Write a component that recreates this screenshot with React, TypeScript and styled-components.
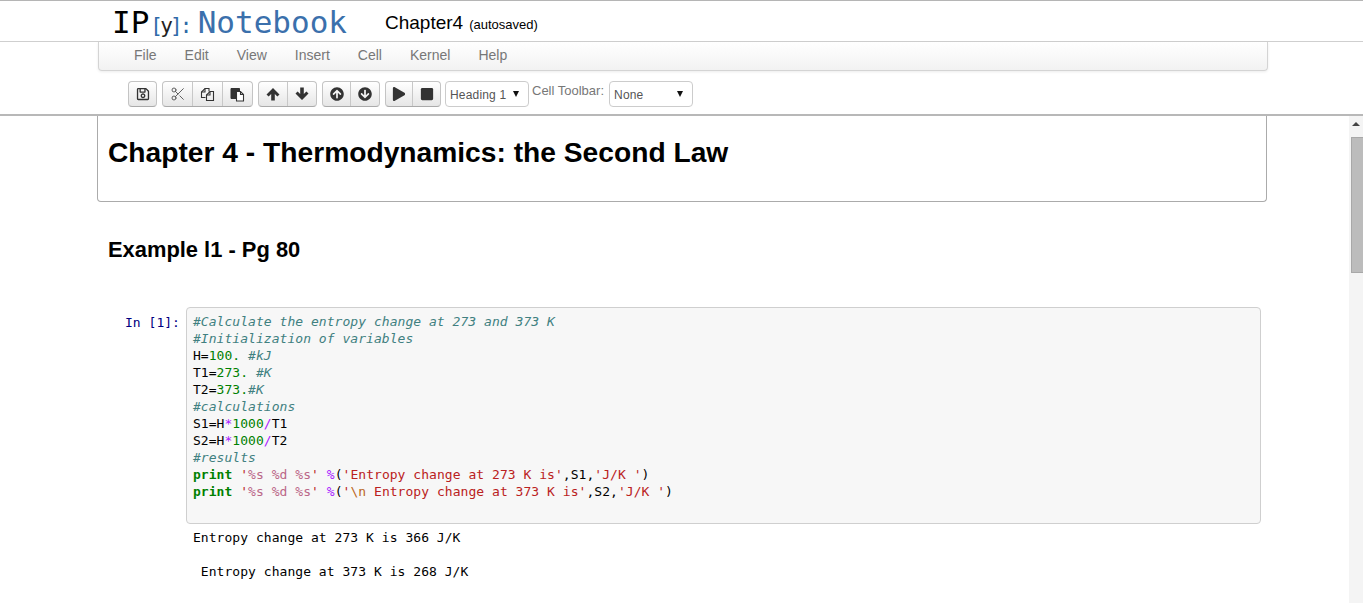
import React from 'react';
import styled, { createGlobalStyle } from 'styled-components';
import { FaRegSave, FaArrowCircleUp, FaArrowCircleDown, FaPlay, FaStop } from 'react-icons/fa';
import { Scissors } from 'lucide-react';

const Global = createGlobalStyle`
  html, body { margin: 0; padding: 0; height: 100%; overflow: hidden; background: #fff; }
  * { box-sizing: border-box; }
`;
const Page = styled.div`
  width: 1363px; height: 603px; display: flex; flex-direction: column;
  font-family: "Liberation Sans", Arial, sans-serif; color: #000; overflow: hidden;
`;
const Header = styled.header`
  height: 42px; flex: none; display: flex; align-items: flex-start; padding-left: 112px;
  border-top: 1px solid #b5b5b5; border-bottom: 1px solid #cfcfcf;
`;
const Logo = styled.div`
  width: 273px; display: flex; align-items: baseline; font-family: "DejaVu Sans Mono", monospace; height: 40px; line-height: 42px; white-space: nowrap;
`;
const LogoIP = styled.span`font-size: 31px; color: #000; margin-right: 1px;`;
const LogoY = styled.span`font-size: 21px; letter-spacing: -2.8px; color: #2f6aa8; margin-right: 8px; b { font-weight: 400; color: #222; }`;
const LogoWord = styled.span`font-size: 31px; color: #3b70ac;`;
const Title = styled.div`font-size: 19px; line-height: 20px; padding-top: 12px; white-space: nowrap;`;
const Saved = styled.span`font-size: 13px; margin-left: 6px;`;
const MenuWrap = styled.div`flex: none; padding: 0 95px 0 98px; height: 29px;`;
const Menu = styled.nav`
  height: 29px; display: flex; align-items: center; padding: 0 0 3px 21px;
  border: 1px solid #d4d4d4; border-top: none; border-radius: 0 0 4px 4px;
  background: linear-gradient(#ffffff, #f2f2f2); box-shadow: 0 1px 3px rgba(0,0,0,.08);
`;
const MenuItem = styled.span`font-size: 14px; color: #777; padding: 0 14px;`;
const Toolbar = styled.div`
  flex: none; height: 45px; display: flex; align-items: flex-start; padding: 10px 0 0 128px;
  border-bottom: 2px solid #b8b8b8;
`;
const Group = styled.div`
  display: flex; height: 26px; margin-right: ${p => p.$gap ?? 5}px;
  border: 1px solid #c4c4c4; border-bottom-color: #aaa; border-radius: 4px; overflow: hidden;
  background: linear-gradient(#ffffff, #e6e6e6);
`;
const Btn = styled.div`
  width: ${p => p.$w}px; display: flex; align-items: center; justify-content: center; color: ${p => p.$c ?? '#333'};
  font-size: 14px; &:not(:last-child) { border-right: 1px solid #c8c8c8; }
`;
const SelectBox = styled.div`
  width: ${p => p.$w}px; height: 26px; border: 1px solid #ccc; border-radius: 4px; background: #fff;
  display: flex; align-items: center; justify-content: space-between; padding: 2px 9px 0 4px; font-size: 12px; letter-spacing: .18px; color: #555;
`;
const Arrow = styled.span`
  width: 0; height: 0; border: 3.5px solid transparent; border-top: 6px solid #111; border-bottom: none; margin-top: -3px;
`;
const ToolbarLabel = styled.span`font-size: 13px; color: #777; line-height: 20px; margin: 0 5px 0 3px; white-space: nowrap;`;
const Body = styled.div`flex: 1; display: flex; min-height: 0;`;
const Main = styled.main`flex: 1; padding: 0 82px 0 97px; min-width: 0;`;
const HeadCell = styled.section`
  height: 86px; border: 1px solid #ababab; border-top: none; border-radius: 0 0 4px 4px; padding: 18px 10px 0;
`;
const H1 = styled.h1`margin: 0; font-size: 28.2px; line-height: 36px; font-weight: 700;`;
const H2 = styled.h2`margin: 34px 0 0 11px; font-size: 21.9px; line-height: 28px; font-weight: 700;`;
const CodeRow = styled.div`display: flex; margin-top: 43px;`;
const Prompt = styled.div`
  width: 89px; flex: none; text-align: right; padding: 7px 6px 0 0; font: 13px/17px "DejaVu Sans Mono", monospace; color: #000080; letter-spacing: .04px;
`;
const CodeBox = styled.div`
  width: 1075px; height: 217px; background: #f7f7f7; border: 1px solid #cfcfcf; border-radius: 4px; padding: 5px 6px 6px;
`;
const Pre = styled.pre`margin: 0; font: 13px/17px "DejaVu Sans Mono", monospace; letter-spacing: .04px; color: #000;`;
const Output = styled(Pre)`margin: 5px 0 0 96px;`;
const Cm = styled.i`color: #408080;`;
const Num = styled.span`color: #008000;`;
const Op = styled.span`color: #aa22ff;`;
const Kw = styled.b`color: #008000;`;
const Str = styled.span`color: #ba2121;`;
const Fmt = styled.span`color: #bb6688;`;
const Esc = styled.span`color: #bb6622;`;
const Scroll = styled.aside`
  width: 14px; flex: none; background: #f4f4f4; display: flex; flex-direction: column; align-items: flex-end;
`;
const UpArrow = styled.span`
  width: 0; height: 0; border: 4px solid transparent; border-bottom: 4px solid #444; border-top: none; margin: 6px 3px 0 0; align-self: flex-end;
`;
const Thumb = styled.div`width: 12px; height: 136px; margin-top: 11px; background: #bcbcbc; border: 1px solid #a8a8a8; border-right: none;`;

const menu = ['File', 'Edit', 'View', 'Insert', 'Cell', 'Kernel', 'Help'];

const ArrowUpIcon = ({ flip }: { flip?: boolean }) => (
  <svg width="14" height="14" viewBox="0 0 14 14" fill="#333" style={flip ? { transform: 'scaleY(-1)' } : undefined}>
    <path d="M7 1 13.5 7.5 11.4 9.6 8.8 7V13.5H5.2V7L2.6 9.6.5 7.5Z" />
  </svg>
);
const CopyIcon = () => (
  <svg width="15" height="15" viewBox="0 0 15 15" fill="none" stroke="#333" strokeWidth="1.1">
    <path d="M5.5 10.5H1.5V5L5 1.5H9V4.5" />
    <path d="M5 1.5V5H1.5" />
    <path d="M6.5 13.5V8L10 4.5H13.5V13.5Z" />
    <path d="M10 4.5V8H6.5" />
  </svg>
);
const PasteIcon = () => (
  <svg width="15" height="15" viewBox="0 0 15 15">
    <path d="M1 1.5H9.5V4H6V11.5H1Z" fill="#333" stroke="#333" />
    <path d="M6.5 4.5H10.5L13.5 7.5V14H6.5Z" fill="#fff" stroke="#333" strokeWidth="1.1" />
    <path d="M10.5 4.5V7.5H13.5" fill="none" stroke="#333" strokeWidth="1.1" />
  </svg>
);

export default function App() {
  return (
    <Page>
      <Global />
      <Header>
        <Logo>
          <LogoIP>IP</LogoIP>
          <LogoY>[<b>y</b>]:</LogoY>
          <LogoWord>Notebook</LogoWord>
        </Logo>
        <Title>Chapter4<Saved>(autosaved)</Saved></Title>
      </Header>
      <MenuWrap>
        <Menu>{menu.map(m => <MenuItem key={m}>{m}</MenuItem>)}</Menu>
      </MenuWrap>
      <Toolbar>
        <Group><Btn $w={27}><FaRegSave /></Btn></Group>
        <Group>
          <Btn $w={30} $c="#555"><Scissors size={16} strokeWidth={1.4} /></Btn>
          <Btn $w={30}><CopyIcon /></Btn>
          <Btn $w={29}><PasteIcon /></Btn>
        </Group>
        <Group>
          <Btn $w={29}><ArrowUpIcon /></Btn>
          <Btn $w={28}><ArrowUpIcon flip /></Btn>
        </Group>
        <Group>
          <Btn $w={28}><FaArrowCircleUp /></Btn>
          <Btn $w={28}><FaArrowCircleDown /></Btn>
        </Group>
        <Group $gap={4}>
          <Btn $w={27}><FaPlay /></Btn>
          <Btn $w={27}><FaStop /></Btn>
        </Group>
        <SelectBox $w={84}><span>Heading 1</span><Arrow /></SelectBox>
        <ToolbarLabel>Cell Toolbar:</ToolbarLabel>
        <SelectBox $w={84}><span>None</span><Arrow /></SelectBox>
      </Toolbar>
      <Body>
        <Main>
          <HeadCell><H1>Chapter 4 - Thermodynamics: the Second Law</H1></HeadCell>
          <H2>Example l1 - Pg 80</H2>
          <CodeRow>
            <Prompt>In [1]:</Prompt>
            <CodeBox>
              <Pre>
                <Cm>#Calculate the entropy change at 273 and 373 K</Cm>{'\n'}
                <Cm>#Initialization of variables</Cm>{'\n'}
                H=<Num>100.</Num> <Cm>#kJ</Cm>{'\n'}
                T1=<Num>273.</Num> <Cm>#K</Cm>{'\n'}
                T2=<Num>373.</Num><Cm>#K</Cm>{'\n'}
                <Cm>#calculations</Cm>{'\n'}
                S1=H<Op>*</Op><Num>1000</Num><Op>/</Op>T1{'\n'}
                S2=H<Op>*</Op><Num>1000</Num><Op>/</Op>T2{'\n'}
                <Cm>#results</Cm>{'\n'}
                <Kw>print</Kw> <Str>'<Fmt>%s</Fmt> <Fmt>%d</Fmt> <Fmt>%s</Fmt>'</Str> <Op>%</Op>(<Str>'Entropy change at 273 K is'</Str>,S1,<Str>'J/K '</Str>){'\n'}
                <Kw>print</Kw> <Str>'<Fmt>%s</Fmt> <Fmt>%d</Fmt> <Fmt>%s</Fmt>'</Str> <Op>%</Op>(<Str>'<Esc>\n</Esc> Entropy change at 373 K is'</Str>,S2,<Str>'J/K '</Str>)
              </Pre>
            </CodeBox>
          </CodeRow>
          <Output>{'Entropy change at 273 K is 366 J/K\n\n Entropy change at 373 K is 268 J/K'}</Output>
        </Main>
        <Scroll><UpArrow /><Thumb /></Scroll>
      </Body>
    </Page>
  );
}
